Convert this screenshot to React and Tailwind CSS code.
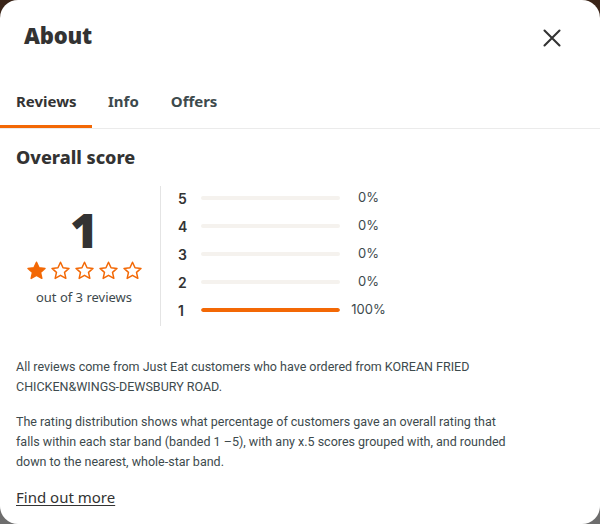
import React from 'react';

const bars = [
  { stars: 5, pct: 0 },
  { stars: 4, pct: 0 },
  { stars: 3, pct: 0 },
  { stars: 2, pct: 0 },
  { stars: 1, pct: 100 },
];

const Star = ({ filled }) => (
  <svg width="21" height="21" viewBox="0 0 24 24" className="shrink-0">
    <path
      d="M12 2.6l2.9 6.3 6.8.7-5.1 4.6 1.5 6.8L12 17.5 5.9 21l1.5-6.8-5.1-4.6 6.8-.7z"
      fill={filled ? '#f36805' : 'none'}
      stroke="#f36805"
      strokeWidth="1.7"
      strokeLinejoin="round"
    />
  </svg>
);

const App = () => {
  const tabs = ['Reviews', 'Info', 'Offers'];

  return (
    <div className="w-[600px] h-[524px] bg-gradient-to-b from-[#3a2418] to-[#6e6e6e] overflow-hidden">
      <div
        className="w-full h-full bg-white rounded-[18px] text-[#242e30] flex flex-col"
        style={{ fontFamily: '"Noto Sans", "Open Sans", sans-serif' }}
      >
        <div className="flex items-center justify-between pl-6 pr-[39px] pt-[10px] h-[74px] pb-[14px]">
          <h1 className="text-[22px] font-black tracking-[-0.2px] text-[#333]">About</h1>
          <button className="text-[#333] mt-[6px]">
            <svg width="18" height="18" viewBox="0 0 18 18">
              <path d="M1.5 1.5l15 15M16.5 1.5l-15 15" stroke="#333" strokeWidth="2.1" strokeLinecap="round" />
            </svg>
          </button>
        </div>

        <div className="flex border-b border-[#ebebeb] h-[55px] items-stretch">
          {tabs.map((t, i) => (
            <div
              key={t}
              className={`flex items-center text-[15px] font-bold ${
                i === 0
                  ? 'pl-4 w-[92px] border-b-[3px] border-[#f36805] text-[#333] pt-[3px]'
                  : i === 1
                  ? 'pl-4 pr-4 text-[#3d4a4d]'
                  : 'pl-[16px] text-[#3d4a4d]'
              }`}
            >
              {t}
            </div>
          ))}
        </div>

        <div className="px-4 pt-[16px]">
          <h2 className="text-[18px] font-extrabold text-[#333] leading-[24px]">Overall score</h2>

          <div className="flex mt-[17px]">
            <div className="w-[136px] flex flex-col items-center pt-[18px]">
              <div className="text-[48px] font-black leading-[52px] text-[#333]">1</div>
              <div className="flex gap-[3px] mt-[4px]">
                <Star filled />
                <Star />
                <Star />
                <Star />
                <Star />
              </div>
              <div className="text-[13px] text-[#3d4a4d] mt-[7px]">out of 3 reviews</div>
            </div>

            <div className="ml-[8px] border-l border-[#e4e4e4] h-[140px] pl-[17px]">
              <div className="-mt-[2px] flex flex-col">
                {bars.map((b) => (
                  <div key={b.stars} className="flex items-center h-[28px]" style={{ fontFamily: 'Inter, sans-serif' }}>
                    <span className="w-[23px] text-[14px] font-semibold text-[#333]">{b.stars}</span>
                    <div className="w-[139px] h-[4px] rounded-full bg-[#f5f2ee] overflow-hidden">
                      <div className="h-full bg-[#f36805] rounded-full" style={{ width: `${b.pct}%` }} />
                    </div>
                    <span className="w-[57px] text-center text-[13px] text-[#3d4a4d]">{b.pct}%</span>
                  </div>
                ))}
              </div>
            </div>
          </div>

          <div
            className="mt-[31px] max-w-[498px] text-[12.5px] leading-[20px] text-[#3d4a4d]"
            style={{ fontFamily: 'Roboto, "Noto Sans", sans-serif' }}
          >
            <p>
              All reviews come from Just Eat customers who have ordered from KOREAN FRIED CHICKEN&amp;WINGS-DEWSBURY ROAD.
            </p>
            <p className="mt-[15px]">
              The rating distribution shows what percentage of customers gave an overall rating that falls within each
              star band (banded 1 –5), with any x.5 scores grouped with, and rounded down to the nearest, whole-star band.
            </p>
          </div>

          <a href="#" className="inline-block mt-[14px] text-[15px] text-[#333] underline underline-offset-2">
            Find out more
          </a>
        </div>
      </div>
    </div>
  );
};

export default App;
